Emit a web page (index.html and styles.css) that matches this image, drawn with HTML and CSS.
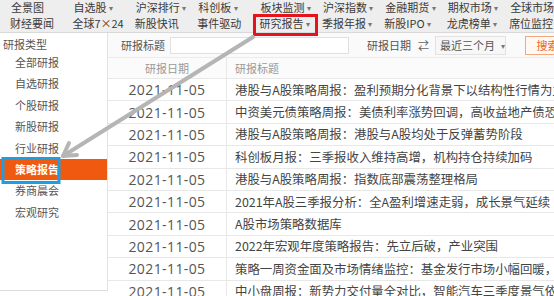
FILE: index.html
```html
<!DOCTYPE html>
<html lang="zh-CN">
  <head>
    <meta charset="UTF-8" />
    <meta name="viewport" content="width=device-width, initial-scale=1.0" />
    <title>研究报告</title>
    <link rel="stylesheet" href="styles.css">
  </head>
  <body>
    <div class="topnav">
      <div class="nav-row">
        <a>全景图</a>
        <a>自选股 <i>▾</i></a>
        <a>沪深排行 <i>▾</i></a>
        <a>科创板 <i>▾</i></a>
        <a>板块监测 <i>▾</i></a>
        <a>沪深指数 <i>▾</i></a>
        <a>金融期货 <i>▾</i></a>
        <a>期权市场 <i>▾</i></a>
        <a>全球市场 <i>▾</i></a>
      </div>
      <div class="nav-row">
        <a>财经要闻</a>
        <a>全球7×24</a>
        <a>新股快讯</a>
        <a>事件驱动</a>
        <a>研究报告 <i>▾</i></a>
        <a>季报年报 <i>▾</i></a>
        <a>新股IPO <i>▾</i></a>
        <a>龙虎榜单 <i>▾</i></a>
        <a>席位监控</a>
      </div>
    </div>

    <div class="page">
      <aside class="sidebar">
        <div class="side-title">研报类型</div>
        <ul class="side-list">
          <li>全部研报</li>
          <li>自选研报</li>
          <li>个股研报</li>
          <li>新股研报</li>
          <li>行业研报</li>
          <li class="active">策略报告</li>
          <li>券商晨会</li>
          <li>宏观研究</li>
        </ul>
      </aside>

      <main class="main">
        <div class="search-bar">
          <span class="label">研报标题</span>
          <input class="title-input" type="text" />
          <span class="label date-label">研报日期</span>
          <span class="swap">⇄</span>
          <div class="select">最近三个月 <i>▾</i></div>
          <button class="search-btn" type="button">搜索</button>
        </div>

        <div class="report-table">
          <div class="row head">
            <div class="cell date">研报日期</div>
            <div class="cell title">研报标题</div>
          </div>
          <div class="row">
            <div class="cell date">2021-11-05</div>
            <div class="cell title">港股与A股策略周报：盈利预期分化背景下以结构性行情为主</div>
          </div>
          <div class="row">
            <div class="cell date">2021-11-05</div>
            <div class="cell title">中资美元债策略周报：美债利率涨势回调，高收益地产债恐慌情绪缓解</div>
          </div>
          <div class="row">
            <div class="cell date">2021-11-05</div>
            <div class="cell title">港股与A股策略周报：港股与A股均处于反弹蓄势阶段</div>
          </div>
          <div class="row">
            <div class="cell date">2021-11-05</div>
            <div class="cell title">科创板月报：三季报收入维持高增，机构持仓持续加码</div>
          </div>
          <div class="row">
            <div class="cell date">2021-11-05</div>
            <div class="cell title">港股与A股策略周报：指数底部震荡整理格局</div>
          </div>
          <div class="row">
            <div class="cell date">2021-11-05</div>
            <div class="cell title">2021年A股三季报分析：全A盈利增速走弱，成长景气延续</div>
          </div>
          <div class="row">
            <div class="cell date">2021-11-05</div>
            <div class="cell title">A股市场策略数据库</div>
          </div>
          <div class="row">
            <div class="cell date">2021-11-05</div>
            <div class="cell title">2022年宏观年度策略报告：先立后破，产业突围</div>
          </div>
          <div class="row">
            <div class="cell date">2021-11-05</div>
            <div class="cell title">策略一周资金面及市场情绪监控：基金发行市场小幅回暖，北向资金流入</div>
          </div>
          <div class="row">
            <div class="cell date">2021-11-05</div>
            <div class="cell title">中小盘周报：新势力交付量全对比，智能汽车三季度景气依旧</div>
          </div>
        </div>
      </main>
    </div>

    <!-- annotation marks drawn over the screenshot -->
    <svg class="marks" width="554" height="296" viewBox="0 0 554 296">
      <rect x="254.5" y="15.5" width="62" height="19" fill="none" stroke="#e5141c" stroke-width="3" />
      <rect x="3" y="158.5" width="56" height="24" fill="none" stroke="#1f9de0" stroke-width="3" />
      <line x1="253" y1="37" x2="63" y2="156" stroke="#b5b5b5" stroke-width="4" stroke-linecap="round" />
      <polyline points="77,155 63,156 69,143" fill="none" stroke="#b5b5b5" stroke-width="4" stroke-linecap="round" stroke-linejoin="round" />
    </svg>
  </body>
</html>
```

FILE: styles.css
```css
body {
  margin: 0;
  padding: 0;
  width: 554px;
  height: 296px;
  overflow: hidden;
  position: relative;
  font-family: "Noto Sans CJK SC", sans-serif;
  font-size: 11px;
  color: #444;
  background-color: #fff;
}

.topnav {
  background-color: #eeeeee;
  border-bottom: 1px solid #d9d9d9;
}

.nav-row {
  display: grid;
  grid-template-columns: repeat(9, 62.4px);
  padding-left: 11px;
  height: 14px;
  line-height: 14px;
  white-space: nowrap;
}

.nav-row + .nav-row {
  height: 18px;
  line-height: 18px;
  padding-left: 10px;
}

.nav-row a {
  color: #3a3a3a;
}

.nav-row i,
.select i {
  font-style: normal;
  font-size: 8px;
  color: #777;
  vertical-align: 1px;
}

.page {
  display: flex;
}

.sidebar {
  width: 108px;
  height: 258px;
  border-right: 1px solid #e3e3e3;
  border-bottom: 1px solid #dcdcdc;
  box-sizing: border-box;
  flex-shrink: 0;
}

.side-title {
  padding: 4px 0 0 3px;
  line-height: 15px;
  color: #555;
}

.side-list {
  list-style: none;
  margin: 0;
  padding: 0;
}

.side-list li {
  height: 21.4px;
  line-height: 21.4px;
  padding-left: 15px;
  color: #555;
}

.side-list li.active {
  background-color: #f05a10;
  color: #fff;
  font-weight: bold;
}

.main {
  flex: 1;
  overflow: hidden;
}

.search-bar {
  display: flex;
  align-items: center;
  height: 24px;
  padding-left: 13px;
  white-space: nowrap;
  background-color: #fafafa;
}

.label {
  color: #555;
}

.title-input {
  width: 182px;
  height: 17px;
  box-sizing: border-box;
  margin: 0 0 0 5px;
  border: 1px solid #e0e0e0;
  background-color: #fff;
  padding: 0;
}

.date-label {
  margin-left: 18px;
}

.swap {
  margin-left: 7px;
  color: #666;
  font-size: 11px;
}

.select {
  margin-left: 6px;
  width: 77px;
  height: 19px;
  line-height: 17px;
  box-sizing: border-box;
  border: 1px solid #e2e2e2;
  background-color: #f7f7f7;
  padding-left: 4px;
  color: #555;
}

.select i {
  margin-left: 4px;
}

.search-btn {
  margin-left: 19px;
  height: 19px;
  padding: 0 10px;
  border: 1px solid #f3a77c;
  background-color: #fff8f3;
  color: #f0651e;
  font-family: "Noto Sans CJK SC", sans-serif;
  font-size: 11px;
  line-height: 17px;
  flex-shrink: 0;
}

.report-table {
  width: 760px;
}

.row {
  display: flex;
  height: 22.4px;
  box-sizing: border-box;
  border-bottom: 1px solid #e8e8e8;
  white-space: nowrap;
}

.row.head {
  height: 22px;
  background-color: #fbfbfb;
  border-top: 1px solid #ececec;
}

.cell {
  display: flex;
  align-items: center;
}

.cell.date {
  width: 118px;
  justify-content: center;
  border-right: 1px solid #e8e8e8;
  font-family: "Open Sans", "Noto Sans CJK SC", sans-serif;
  font-size: 14px;
  letter-spacing: 0.4px;
  color: #555;
  flex-shrink: 0;
}

.cell.title {
  padding-left: 8px;
  font-size: 12.4px;
  color: #444;
}

.row.head .cell {
  font-family: "Noto Sans CJK SC", sans-serif;
  font-size: 11px;
  letter-spacing: 0;
  color: #999;
}

.marks {
  position: absolute;
  top: 0;
  left: 0;
  pointer-events: none;
}
```
